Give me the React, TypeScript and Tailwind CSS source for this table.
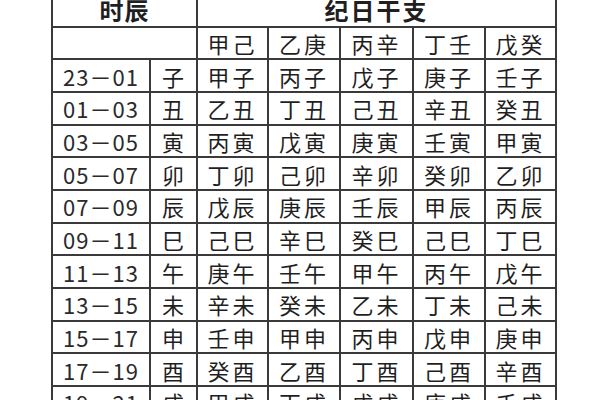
import React from "react";

const stems = ["甲己", "乙庚", "丙辛", "丁壬", "戊癸"];

const rows: [string, string, string[]][] = [
  ["23－01", "子", ["甲子", "丙子", "戊子", "庚子", "壬子"]],
  ["01－03", "丑", ["乙丑", "丁丑", "己丑", "辛丑", "癸丑"]],
  ["03－05", "寅", ["丙寅", "戊寅", "庚寅", "壬寅", "甲寅"]],
  ["05－07", "卯", ["丁卯", "己卯", "辛卯", "癸卯", "乙卯"]],
  ["07－09", "辰", ["戊辰", "庚辰", "壬辰", "甲辰", "丙辰"]],
  ["09－11", "巳", ["己巳", "辛巳", "癸巳", "己巳", "丁巳"]],
  ["11－13", "午", ["庚午", "壬午", "甲午", "丙午", "戊午"]],
  ["13－15", "未", ["辛未", "癸未", "乙未", "丁未", "己未"]],
  ["15－17", "申", ["壬申", "甲申", "丙申", "戊申", "庚申"]],
  ["17－19", "酉", ["癸酉", "乙酉", "丁酉", "己酉", "辛酉"]],
  ["19－21", "戌", ["甲戌", "丙戌", "戊戌", "庚戌", "壬戌"]],
  ["21－23", "亥", ["乙亥", "丁亥", "己亥", "辛亥", "癸亥"]],
];

const cell =
  "bg-white h-[30.67px] flex items-center justify-center text-[22px] leading-none text-[#1f1f1f] tracking-[1px]";

export default function App() {
  return (
    <div
      className="w-[600px] h-[400px] overflow-hidden bg-white"
      style={{ fontFamily: '"Noto Sans CJK SC", "Noto Sans", sans-serif' }}
    >
      <div className="ml-[51px] mt-[-7px] w-[506px] grid grid-cols-[96px_45px_69px_70px_71px_70px_69px] gap-[2px] p-[2px] bg-[#3a3a3a]">
        <div className={`${cell} col-span-2 font-bold text-[24px]`}>时辰</div>
        <div className={`${cell} col-span-5 font-bold text-[24px] tracking-[2px]`}>纪日干支</div>
        <div className={`${cell} col-span-2`}></div>
        {stems.map((s) => (
          <div key={s} className={`${cell} tracking-[3px]`}>
            {s}
          </div>
        ))}
        {rows.map(([t, b, items]) => (
          <React.Fragment key={t}>
            <div className={`${cell} text-[#2a2a2a] tracking-[1.5px]`}>{t}</div>
            <div className={cell}>{b}</div>
            {items.map((it, i) => (
              <div key={i} className={`${cell} tracking-[3px]`}>
                {it}
              </div>
            ))}
          </React.Fragment>
        ))}
      </div>
    </div>
  );
}
